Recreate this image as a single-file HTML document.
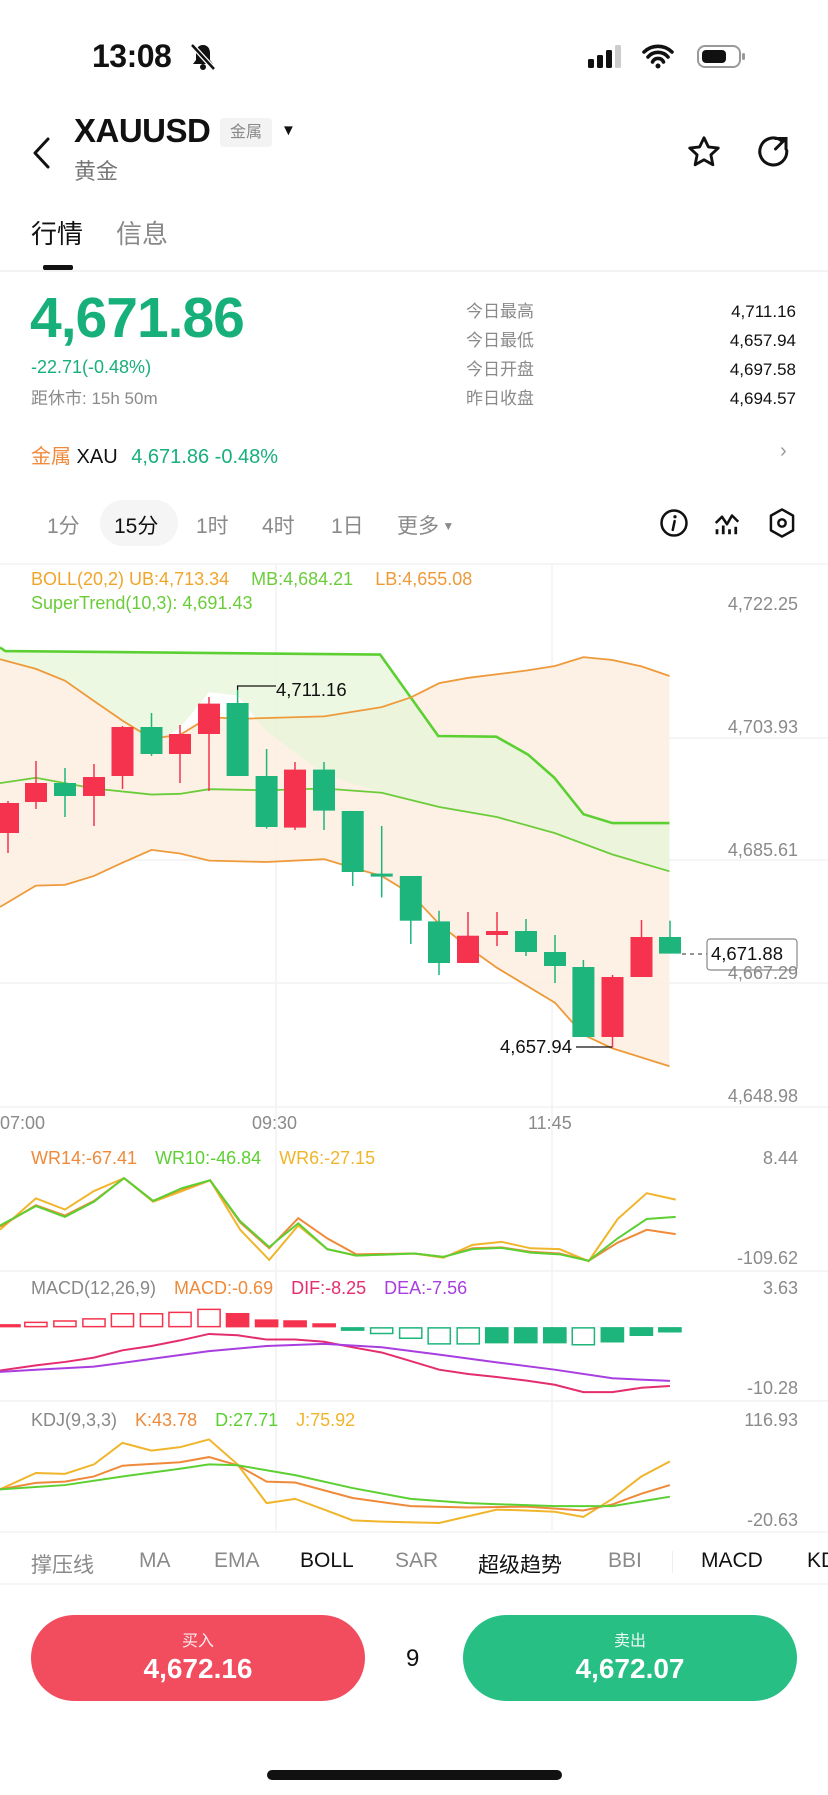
<!DOCTYPE html>
<html><head><meta charset="utf-8"><style>
*{margin:0;padding:0;box-sizing:border-box}
body{width:828px;height:1795px;background:#fff;font-family:"Liberation Sans","Noto Sans CJK SC",sans-serif;position:relative;overflow:hidden;color:#111}
.a{position:absolute;white-space:nowrap}
.gray{color:#8a8a8a}
.g{color:#17b07a}
.lg{font-size:18px}
.lg span{margin-left:22px}
</style></head><body>
<div class="a" style="left:92px;top:38px;font-size:32px;font-weight:bold;letter-spacing:-0.5px">13:08</div>
<svg class="a" style="left:188px;top:42px" width="30" height="30" viewBox="0 0 30 30"><path d="M15 3c-5 0-7 4-7 8v7l-3 4h20l-3-4v-7c0-4-2-8-7-8z" fill="#111"/><circle cx="15" cy="25" r="3" fill="#111"/><path d="M4 3l22 24" stroke="#fff" stroke-width="5"/><path d="M4 3l22 24" stroke="#111" stroke-width="2.5"/></svg>
<svg class="a" style="left:588px;top:44px" width="170" height="26" viewBox="0 0 170 26"><rect x="0" y="15" width="6" height="9" rx="1.5" fill="#111"/><rect x="9" y="11" width="6" height="13" rx="1.5" fill="#111"/><rect x="18" y="6" width="6" height="18" rx="1.5" fill="#111"/><rect x="27" y="1" width="6" height="23" rx="1.5" fill="#ccc"/><path d="M56 8a20 20 0 0 1 28 0M60 13a13 13 0 0 1 20 0M64.5 18a6 6 0 0 1 11 0" stroke="#111" stroke-width="3.6" fill="none" stroke-linecap="round"/><circle cx="70" cy="22" r="2.5" fill="#111"/><rect x="110" y="2" width="42" height="21" rx="7" fill="none" stroke="#999" stroke-width="2"/><rect x="114" y="6" width="24" height="13" rx="4" fill="#111"/><rect x="154" y="9" width="3" height="7" rx="1.5" fill="#999"/></svg>

<svg class="a" style="left:30px;top:136px" width="24" height="34" viewBox="0 0 24 34"><path d="M18 3L5 17l13 14" stroke="#111" stroke-width="3" fill="none" stroke-linecap="round" stroke-linejoin="round"/></svg>
<div class="a" style="left:74px;top:112px;font-size:33px;font-weight:bold;letter-spacing:-0.5px">XAUUSD</div>
<div class="a" style="left:220px;top:118px;width:52px;height:29px;background:#f3f3f3;border-radius:3px;font-size:16px;color:#888;text-align:center;line-height:29px">金属</div>
<div class="a" style="left:281px;top:122px;font-size:15px">▼</div>
<div class="a" style="left:74px;top:154px;font-size:22px;color:#777">黄金</div>
<svg class="a" style="left:686px;top:134px" width="36" height="36" viewBox="0 0 24 24"><path d="M12 2.5l2.9 6.1 6.6.8-4.9 4.5 1.3 6.6L12 17.2l-5.9 3.3 1.3-6.6L2.5 9.4l6.6-.8z" stroke="#111" stroke-width="1.9" fill="none" stroke-linejoin="round"/></svg>
<svg class="a" style="left:756px;top:134px" width="36" height="36" viewBox="0 0 24 24"><path d="M17 4.5A9 9 0 1 0 20.5 11" stroke="#111" stroke-width="2" fill="none" stroke-linecap="round"/><path d="M13 3h7v7M20 3l-7 7" stroke="#111" stroke-width="2" fill="none" stroke-linecap="round"/></svg>

<div class="a" style="left:31px;top:214px;font-size:26px">行情</div>
<div class="a" style="left:116px;top:214px;font-size:26px;color:#888">信息</div>
<div class="a" style="left:43px;top:265px;width:30px;height:5px;background:#111;border-radius:2px"></div>
<div class="a" style="left:0;top:270px;width:828px;height:2px;background:#f3f3f3"></div>

<div class="a g" style="left:30px;top:285px;font-size:57px;font-weight:bold;letter-spacing:-1px">4,671.86</div>
<div class="a g" style="left:31px;top:357px;font-size:18px">-22.71(-0.48%)</div>
<div class="a gray" style="left:31px;top:384px;font-size:17px">距休市: 15h 50m</div>
<div class="a gray" style="left:466px;top:297px;font-size:17px;line-height:29px">今日最高<br>今日最低<br>今日开盘<br>昨日收盘</div>
<div class="a" style="right:32px;top:297px;font-size:17px;line-height:29px;text-align:right">4,711.16<br>4,657.94<br>4,697.58<br>4,694.57</div>

<div class="a" style="left:31px;top:440px;font-size:20px"><span style="color:#f08a3c">金属</span> XAU <span class="g" style="margin-left:8px">4,671.86 -0.48%</span></div>
<div class="a" style="left:780px;top:440px;font-size:20px;color:#999">›</div>

<div class="a" style="left:100px;top:500px;width:78px;height:46px;background:#f5f5f5;border-radius:23px"></div>
<div class="a gray" style="left:47px;top:510px;font-size:21px">1分</div>
<div class="a" style="left:114px;top:510px;font-size:21px">15分</div>
<div class="a gray" style="left:196px;top:510px;font-size:21px">1时</div>
<div class="a gray" style="left:262px;top:510px;font-size:21px">4时</div>
<div class="a gray" style="left:331px;top:510px;font-size:21px">1日</div>
<div class="a gray" style="left:397px;top:510px;font-size:21px">更多<span style="font-size:12px;vertical-align:3px"> ▼</span></div>
<svg class="a" style="left:659px;top:508px" width="30" height="30" viewBox="0 0 24 24"><circle cx="12" cy="12" r="10" stroke="#111" stroke-width="2" fill="none"/><circle cx="12.8" cy="7" r="1.3" fill="#111"/><path d="M12.5 10.5l-1.5 7" stroke="#111" stroke-width="2" stroke-linecap="round"/></svg>
<svg class="a" style="left:712px;top:508px" width="30" height="30" viewBox="0 0 24 24"><path d="M3 12l5-5 4 6 4-7 5 5" stroke="#111" stroke-width="2" fill="none" stroke-linejoin="round"/><path d="M4 17v4M9 14v7M14 17v4M19 15v6" stroke="#111" stroke-width="2.2"/></svg>
<svg class="a" style="left:767px;top:507px" width="30" height="32" viewBox="0 0 24 26"><path d="M12 2l9 5v12l-9 5-9-5V7z" stroke="#111" stroke-width="2" fill="none" stroke-linejoin="round"/><circle cx="12" cy="13" r="3" stroke="#111" stroke-width="2" fill="none"/></svg>

<svg class="a" style="left:0;top:0" width="828" height="1795">
<g stroke="#f2f2f2" stroke-width="1.5">
<line x1="0" y1="564" x2="828" y2="564"/>
<line x1="0" y1="738" x2="828" y2="738"/>
<line x1="0" y1="860" x2="828" y2="860"/>
<line x1="0" y1="983" x2="828" y2="983"/>
<line x1="0" y1="1107" x2="828" y2="1107"/>
<line x1="276" y1="564" x2="276" y2="1530"/>
<line x1="552" y1="564" x2="552" y2="1530"/>
<line x1="0" y1="1271" x2="828" y2="1271"/>
<line x1="0" y1="1401" x2="828" y2="1401"/>
<line x1="0" y1="1532" x2="828" y2="1532"/>
<line x1="0" y1="1584" x2="828" y2="1584"/>
</g>
<g transform="translate(0,560) scale(0.528,0.357)">
<polygon fill="#fdeedf" opacity="0.8" points="0,278 68,305 123,338 178,395 232,450 287,500 341,490 396,440 450,445 614,438 723,412 778,385 832,345 887,330 996,310 1051,297 1105,272 1160,280 1215,298 1268,325 1268,1418 1160,1368 1105,1330 1051,1240 941,1142 887,1085 832,1020 778,935 723,885 668,862 614,838 505,846 396,842 341,822 287,812 232,848 178,885 123,910 68,912 0,972"/>
<polygon fill="#e6f5d8" opacity="0.75" points="0,245 10,255 720,265 830,493 940,495 1000,545 1050,610 1105,712 1160,737 1268,737 1268,872 1160,825 1051,765 941,720 832,692 723,652 614,600 505,480 450,380 396,370 341,470 287,520 232,450 178,395 123,338 68,305 0,278"/>
<g fill="none">
<polyline vector-effect="non-scaling-stroke" stroke="#5cd033" stroke-width="2.6" points="0,245 10,255 720,265 830,493 940,495 1000,545 1050,610 1105,712 1160,737 1268,737"/>
<polyline vector-effect="non-scaling-stroke" stroke="#6bcc3a" stroke-width="1.8" points="0,625 68,610 178,640 287,657 341,655 396,642 505,645 614,640 723,652 832,692 941,720 1051,765 1160,825 1268,872"/>
<polyline vector-effect="non-scaling-stroke" stroke="#ee9a3a" stroke-width="1.8" points="0,278 68,305 123,338 178,395 232,450 287,500 341,490 396,440 450,445 614,438 723,412 778,385 832,345 887,330 996,310 1051,297 1105,272 1160,280 1215,298 1268,325"/>
<polyline vector-effect="non-scaling-stroke" stroke="#ee9a3a" stroke-width="1.8" points="0,972 68,912 123,910 178,885 232,848 287,812 341,822 396,842 505,846 614,838 668,862 723,885 778,935 832,1020 887,1085 941,1142 1051,1240 1105,1330 1160,1368 1268,1418"/>
</g>
</g>
<g stroke-width="1.5">
<g stroke="#f5334f" fill="#f5334f">
<line x1="8" y1="801" x2="8" y2="853"/><rect x="-3" y="803" width="22" height="30" stroke="none"/>
<line x1="36" y1="761" x2="36" y2="809"/><rect x="25" y="783" width="22" height="19" stroke="none"/>
<line x1="94" y1="764" x2="94" y2="826"/><rect x="83" y="777" width="22" height="19" stroke="none"/>
<line x1="122.5" y1="726" x2="122.5" y2="789"/><rect x="111.5" y="727" width="22" height="49" stroke="none"/>
<line x1="180" y1="725" x2="180" y2="783"/><rect x="169" y="734" width="22" height="20" stroke="none"/>
<line x1="209" y1="697" x2="209" y2="791"/><rect x="198" y="703.6" width="22" height="30.4" stroke="none"/>
<line x1="295" y1="762" x2="295" y2="830"/><rect x="284" y="769.6" width="22" height="58" stroke="none"/>
<line x1="468" y1="912" x2="468" y2="963"/><rect x="457" y="935.7" width="22" height="27.3" stroke="none"/>
<line x1="497" y1="912" x2="497" y2="946"/><rect x="486" y="931" width="22" height="4" stroke="none"/>
<line x1="612.5" y1="975" x2="612.5" y2="1047.5"/><rect x="601.5" y="977" width="22" height="60" stroke="none"/>
<line x1="641.5" y1="920" x2="641.5" y2="977"/><rect x="630.5" y="937" width="22" height="40" stroke="none"/>
</g>
<g stroke="#1db57b" fill="#1db57b">
<line x1="65" y1="768" x2="65" y2="817"/><rect x="54" y="783" width="22" height="13" stroke="none"/>
<line x1="151.5" y1="713" x2="151.5" y2="756"/><rect x="140.5" y="727" width="22" height="27" stroke="none"/>
<line x1="237.6" y1="690" x2="237.6" y2="776"/><rect x="226.6" y="703" width="22" height="73" stroke="none"/>
<line x1="266.6" y1="749" x2="266.6" y2="828.6"/><rect x="255.6" y="776" width="22" height="51" stroke="none"/>
<line x1="324" y1="762" x2="324" y2="830"/><rect x="313" y="769.6" width="22" height="41" stroke="none"/>
<line x1="352.7" y1="811" x2="352.7" y2="886"/><rect x="341.7" y="811" width="22" height="61" stroke="none"/>
<line x1="381.7" y1="826" x2="381.7" y2="897.5"/><rect x="370.7" y="873.6" width="22" height="3" stroke="none"/>
<line x1="410.8" y1="876" x2="410.8" y2="944"/><rect x="399.8" y="876" width="22" height="44.7" stroke="none"/>
<line x1="439" y1="910.7" x2="439" y2="975"/><rect x="428" y="921.4" width="22" height="41.6" stroke="none"/>
<line x1="526" y1="919" x2="526" y2="956"/><rect x="515" y="931" width="22" height="21" stroke="none"/>
<line x1="555" y1="935" x2="555" y2="983"/><rect x="544" y="952" width="22" height="14" stroke="none"/>
<line x1="583.4" y1="960" x2="583.4" y2="1037"/><rect x="572.4" y="967" width="22" height="70" stroke="none"/>
<line x1="670" y1="920.7" x2="670" y2="953.6"/><rect x="659" y="937" width="22" height="16.6" stroke="none"/>
</g>
</g>
<path d="M237.6 690V686H276" stroke="#111" stroke-width="1.3" fill="none"/>
<path d="M576 1047H612" stroke="#111" stroke-width="1.3"/>
<path d="M682 954H708" stroke="#555" stroke-width="1.3" stroke-dasharray="4 4"/>
<rect x="707" y="939" width="90" height="31" rx="3" fill="#fff" stroke="#888" stroke-width="1.2"/>
<g transform="translate(0,1120) scale(0.5279,0.4305)" fill="none">
<polyline vector-effect="non-scaling-stroke" stroke="#f0b52a" stroke-width="2" points="0,255 68,182 123,208 178,165 235,135 290,190 345,165 398,140 455,255 510,325 565,245 620,300 675,315 785,310 840,320 895,290 950,283 1005,298 1060,300 1115,328 1170,230 1225,170 1280,185"/>
<polyline vector-effect="non-scaling-stroke" stroke="#ee8a3a" stroke-width="2" points="0,248 68,198 123,222 178,188 235,135 290,188 345,160 398,140 455,238 510,298 565,228 620,275 675,312 785,310 840,318 895,298 950,296 1005,306 1060,310 1115,327 1170,285 1225,255 1280,265"/>
<polyline vector-effect="non-scaling-stroke" stroke="#5cd033" stroke-width="2" points="0,245 68,200 123,225 178,190 235,135 290,188 345,158 398,140 455,235 510,295 565,240 620,300 675,315 785,310 840,318 895,300 950,297 1005,308 1060,312 1115,327 1170,275 1225,230 1280,225"/>
<g stroke="#f5334f" stroke-width="1.5">
<rect vector-effect="non-scaling-stroke" x="-10" y="476" width="48" height="4" fill="#f5334f"/>
<rect vector-effect="non-scaling-stroke" x="47" y="470" width="42" height="10"/>
<rect vector-effect="non-scaling-stroke" x="102" y="467" width="42" height="13"/>
<rect vector-effect="non-scaling-stroke" x="157" y="462" width="42" height="18"/>
<rect vector-effect="non-scaling-stroke" x="211" y="450" width="42" height="30"/>
<rect vector-effect="non-scaling-stroke" x="266" y="450" width="42" height="30"/>
<rect vector-effect="non-scaling-stroke" x="320" y="447" width="42" height="33"/>
<rect vector-effect="non-scaling-stroke" x="375" y="440" width="42" height="40"/>
<rect vector-effect="non-scaling-stroke" x="429" y="450" width="42" height="30" fill="#f5334f"/>
<rect vector-effect="non-scaling-stroke" x="484" y="465" width="42" height="15" fill="#f5334f"/>
<rect vector-effect="non-scaling-stroke" x="538" y="467" width="42" height="13" fill="#f5334f"/>
<rect vector-effect="non-scaling-stroke" x="593" y="474" width="42" height="6" fill="#f5334f"/>
</g>
<g stroke="#1db57b" stroke-width="1.5">
<rect vector-effect="non-scaling-stroke" x="647" y="483" width="42" height="5" fill="#1db57b"/>
<rect vector-effect="non-scaling-stroke" x="702" y="483" width="42" height="13"/>
<rect vector-effect="non-scaling-stroke" x="757" y="483" width="42" height="24"/>
<rect vector-effect="non-scaling-stroke" x="811" y="483" width="42" height="37"/>
<rect vector-effect="non-scaling-stroke" x="866" y="483" width="42" height="37"/>
<rect vector-effect="non-scaling-stroke" x="920" y="483" width="42" height="34" fill="#1db57b"/>
<rect vector-effect="non-scaling-stroke" x="975" y="483" width="42" height="34" fill="#1db57b"/>
<rect vector-effect="non-scaling-stroke" x="1030" y="483" width="42" height="34" fill="#1db57b"/>
<rect vector-effect="non-scaling-stroke" x="1084" y="483" width="42" height="39"/>
<rect vector-effect="non-scaling-stroke" x="1139" y="483" width="42" height="32" fill="#1db57b"/>
<rect vector-effect="non-scaling-stroke" x="1194" y="483" width="42" height="17" fill="#1db57b"/>
<rect vector-effect="non-scaling-stroke" x="1248" y="483" width="42" height="9" fill="#1db57b"/>
</g>
<polyline vector-effect="non-scaling-stroke" stroke="#e42d6e" stroke-width="2" points="0,582 68,570 123,562 178,552 232,535 287,525 341,512 396,497 450,500 505,510 559,510 614,515 668,528 723,540 778,560 832,580 887,590 941,597 996,605 1051,615 1105,632 1160,632 1215,622 1269,618"/>
<polyline vector-effect="non-scaling-stroke" stroke="#a83ee0" stroke-width="2" points="0,585 68,580 178,573 287,555 396,537 505,525 614,520 723,528 832,545 941,563 1051,580 1160,600 1269,606"/>
<polyline vector-effect="non-scaling-stroke" stroke="#f0b52a" stroke-width="2" points="0,858 68,820 123,822 178,800 232,750 287,768 341,760 396,742 450,800 505,890 559,880 614,905 668,930 723,933 832,936 941,905 996,907 1051,910 1105,922 1160,880 1215,828 1269,793"/>
<polyline vector-effect="non-scaling-stroke" stroke="#ee8a3a" stroke-width="2" points="0,858 68,843 123,840 178,828 232,803 341,795 396,783 450,802 505,840 559,842 668,878 778,897 887,900 996,898 1105,907 1160,893 1215,868 1269,848"/>
<polyline vector-effect="non-scaling-stroke" stroke="#5cd033" stroke-width="2" points="0,858 123,848 232,828 341,810 396,800 450,802 559,825 668,855 778,880 887,890 1051,897 1160,897 1269,875"/>
</g>
</svg>
<div class="a lg" style="left:31px;top:569px;color:#f0a52a">BOLL(20,2) UB:4,713.34<span style="color:#6bcc3a">MB:4,684.21</span><span style="color:#ee9a3a">LB:4,655.08</span></div>
<div class="a lg" style="left:31px;top:593px;color:#6bcc3a">SuperTrend(10,3): 4,691.43</div>
<div class="a" style="left:276px;top:679px;font-size:18.5px">4,711.16</div>
<div class="a" style="left:500px;top:1036px;font-size:18.5px">4,657.94</div>
<div class="a" style="left:711px;top:943px;font-size:18.5px">4,671.88</div>
<div class="a gray" style="right:30px;top:543px;font-size:18px;text-align:right;line-height:123px">4,722.25<br>4,703.93<br>4,685.61<br>4,667.29<br>4,648.98</div>
<div class="a gray" style="left:0;top:1113px;font-size:18px">07:00</div>
<div class="a gray" style="left:252px;top:1113px;font-size:18px">09:30</div>
<div class="a gray" style="left:528px;top:1113px;font-size:18px">11:45</div>

<div class="a lg" style="left:31px;top:1148px;color:#ee8a3a">WR14:-67.41<span style="color:#5cd033;margin-left:18px">WR10:-46.84</span><span style="color:#f0b52a;margin-left:18px">WR6:-27.15</span></div>
<div class="a gray" style="right:30px;top:1148px;font-size:18px">8.44</div>
<div class="a gray" style="right:30px;top:1248px;font-size:18px">-109.62</div>
<div class="a lg" style="left:31px;top:1278px;color:#888">MACD(12,26,9)<span style="color:#ee8a3a;margin-left:18px">MACD:-0.69</span><span style="color:#e42d6e;margin-left:18px">DIF:-8.25</span><span style="color:#a83ee0;margin-left:18px">DEA:-7.56</span></div>
<div class="a gray" style="right:30px;top:1278px;font-size:18px">3.63</div>
<div class="a gray" style="right:30px;top:1378px;font-size:18px">-10.28</div>
<div class="a lg" style="left:31px;top:1410px;color:#888">KDJ(9,3,3)<span style="color:#ee8a3a;margin-left:18px">K:43.78</span><span style="color:#5cd033;margin-left:18px">D:27.71</span><span style="color:#f0b52a;margin-left:18px">J:75.92</span></div>
<div class="a gray" style="right:30px;top:1410px;font-size:18px">116.93</div>
<div class="a gray" style="right:30px;top:1510px;font-size:18px">-20.63</div>

<div class="a gray" style="left:31px;top:1549px;font-size:21px">撑压线</div>
<div class="a gray" style="left:139px;top:1549px;font-size:21px">MA</div>
<div class="a gray" style="left:214px;top:1549px;font-size:21px">EMA</div>
<div class="a" style="left:300px;top:1549px;font-size:21px">BOLL</div>
<div class="a gray" style="left:395px;top:1549px;font-size:21px">SAR</div>
<div class="a" style="left:478px;top:1549px;font-size:21px">超级趋势</div>
<div class="a gray" style="left:608px;top:1549px;font-size:21px">BBI</div>
<div class="a" style="left:672px;top:1551px;width:1px;height:22px;background:#eee"></div>
<div class="a" style="left:701px;top:1549px;font-size:21px">MACD</div>
<div class="a" style="left:807px;top:1549px;font-size:21px">KD</div>

<div class="a" style="left:31px;top:1615px;width:334px;height:86px;border-radius:43px;background:#f24c5f;color:#fff;text-align:center">
<div style="font-size:16px;margin-top:12px;opacity:.9">买入</div><div style="font-size:28px;font-weight:bold;margin-top:2px">4,672.16</div></div>
<div class="a" style="left:406px;top:1645px;font-size:24px">9</div>
<div class="a" style="left:463px;top:1615px;width:334px;height:86px;border-radius:43px;background:#28bf85;color:#fff;text-align:center">
<div style="font-size:16px;margin-top:12px;opacity:.9">卖出</div><div style="font-size:28px;font-weight:bold;margin-top:2px">4,672.07</div></div>
<div class="a" style="left:267px;top:1770px;width:295px;height:10px;border-radius:5px;background:#111"></div>
</body></html>
